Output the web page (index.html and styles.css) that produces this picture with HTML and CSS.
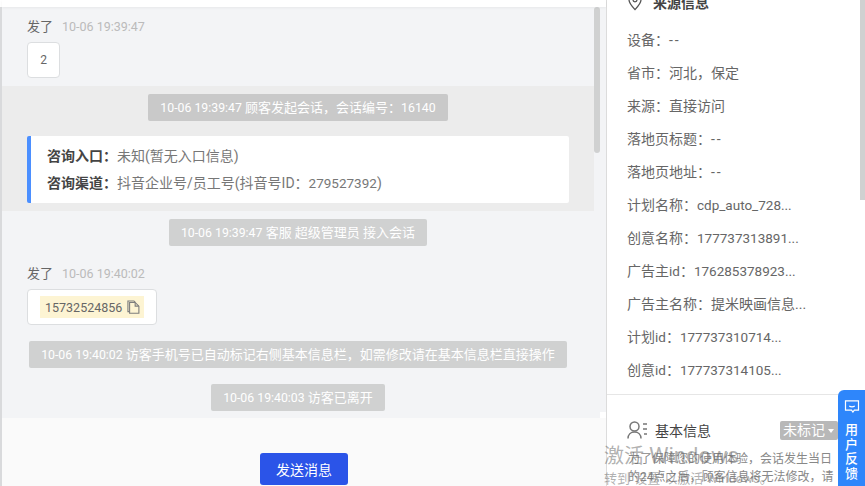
FILE: index.html
```html
<!DOCTYPE html>
<html lang="zh-CN">
<head>
<meta charset="utf-8">
<title>会话详情</title>
<link rel="stylesheet" href="styles.css">
</head>
<body>
<div class="page">
  <div class="edge"></div>
  <main class="chat">
    <div class="topbar"></div>
    <div class="chat-body">
      <div class="messages">
        <section class="msg msg-first">
          <div class="meta"><span class="who">发了</span><span class="time">10-06 19:39:47</span></div>
          <div class="bubble bubble-num">2</div>
        </section>
        <section class="band">
          <div class="pill pill-dark"><span class="num">10-06 19:39:47</span> 顾客发起会话，会话编号：<span class="num">16140</span></div>
          <div class="card">
            <p class="card-row"><b>咨询入口：</b>未知(暂无入口信息)</p>
            <p class="card-row"><b>咨询渠道：</b>抖音企业号/员工号(抖音号ID：<span class="val">279527392</span>)</p>
          </div>
        </section>
        <div class="after">
          <div class="pill"><span class="num">10-06 19:39:47</span> 客服 超级管理员 接入会话</div>
          <section class="msg msg-second">
            <div class="meta"><span class="who">发了</span><span class="time">10-06 19:40:02</span></div>
            <div class="bubble bubble-phone">
              <span class="phone">15732524856
                <svg class="copy" viewBox="0 0 14 15" width="13" height="14" fill="none" stroke="#7d7d7d" stroke-width="1.2"><path d="M2.6 12.5H1V1h6.4l1.4 1.4"/><path d="M2.8 2.6h6l4 4v7.6h-10z"/><path d="M8.8 2.6v4h4"/></svg>
              </span>
            </div>
          </section>
          <div class="pill"><span class="num">10-06 19:40:02</span> 访客手机号已自动标记右侧基本信息栏，如需修改请在基本信息栏直接操作</div>
          <div class="pill"><span class="num">10-06 19:40:03</span> 访客已离开</div>
        </div>
      </div>
      <div class="track"><div class="thumb"></div><div class="corner"></div></div>
    </div>
    <div class="composer"><button class="send" type="button">发送消息</button></div>
  </main>
  <aside class="side">
    <div class="side-scroll"></div>
    <div class="side-inner">
      <h3 class="side-title">
        <svg class="pin" viewBox="0 0 14 18" width="14" height="18" fill="none" stroke="#555" stroke-width="1.3"><path d="M7 16.6C3.6 13 1 10 1 6.8a6 6 0 0 1 12 0C13 10 10.4 13 7 16.6z"/><circle cx="7" cy="6.8" r="2"/></svg>
        来源信息
      </h3>
      <ul class="rows">
        <li>设备：<span class="dash">--</span></li>
        <li>省市：河北，保定</li>
        <li>来源：直接访问</li>
        <li>落地页标题：<span class="dash">--</span></li>
        <li>落地页地址：<span class="dash">--</span></li>
        <li>计划名称：<span class="val">cdp_auto_728...</span></li>
        <li>创意名称：<span class="val">177737313891...</span></li>
        <li>广告主<span class="val">id</span>：<span class="val">176285378923...</span></li>
        <li>广告主名称：提米映画信息...</li>
        <li>计划<span class="val">id</span>：<span class="val">177737310714...</span></li>
        <li>创意<span class="val">id</span>：<span class="val">177737314105...</span></li>
      </ul>
      <div class="basic">
        <div class="basic-head">
          <svg class="person" viewBox="0 0 20 18" width="20" height="18" fill="none" stroke="#777" stroke-width="1.5"><circle cx="7.5" cy="5.5" r="4.5"/><path d="M1 17.500c0-4 2.800-6.600 6.500-6.600s6.500 2.600 6.500 6.600"/><path d="M16 3h4M16 8h4M17 13h3"/></svg>
          <span class="basic-title">基本信息</span>
          <span class="tag">未标记<i class="caret"></i></span>
        </div>
        <p class="note">为了保障您的使用体验，会话发生当日的24点之后，顾客信息将无法修改，请</p>
      </div>
    </div>
  </aside>
  <button class="feedback" type="button">
    <svg viewBox="0 0 16 14" width="16" height="13" fill="none" stroke="#fff" stroke-width="1.3"><path d="M1 1h14v10h-4.500L9 13l-1.500-2H1z"/><path d="M5 6.500c1.600 1 4.400 1 6 0"/></svg>
    <span class="feedback-text">用户反馈</span>
  </button>
  <div class="watermark">
    <div class="wm-big">激活 <span class="wm-latin">Windows</span></div>
    <div class="wm-small">转到"设置"以激活 Windows。</div>
  </div>
</div>
</body>
</html>
```

FILE: styles.css
```css
* { box-sizing: border-box; }
html, body { margin: 0; height: 100%; overflow: hidden; }
body {
  font-family: Roboto, "Noto Sans CJK SC", sans-serif;
  font-size: 13px;
  color: #666;
  background: #fff;
}
.page { position: relative; display: flex; width: 865px; height: 486px; overflow: hidden; }
.edge { width: 2px; background: #d9dadc; flex: none; margin-top: 7px; }
.chat {
  width: 605px;
  flex: none;
  display: flex;
  flex-direction: column;
  border-right: 1px solid #dcdcdc;
  background: #fafafa;
}
.topbar { height: 7px; flex: none; background: #fff; box-shadow: 0 1px 3px rgba(0,0,0,.05); position: relative; }
.chat-body { height: 411px; flex: none; display: flex; background: #f3f4f6; }
.messages { width: 592px; flex: none; }
.track { flex: 1; display: flex; flex-direction: column; }
.thumb { width: 6px; height: 146px; background: #d0d1d1; border-radius: 3px; }
.corner { margin-top: auto; margin-left: 6px; height: 6px; background: #fff; }
.msg-first { padding: 10px 25px 8px; }
.meta { height: 20px; line-height: 20px; display: flex; gap: 9px; }
.who { color: #666; }
.time { color: #bbb; font-size: 12.5px; }
.bubble {
  margin-top: 5px;
  height: 36px;
  display: inline-flex;
  align-items: center;
  background: #fff;
  border: 1px solid #dcdee0;
  border-radius: 4px;
}
.bubble-num { width: 33px; justify-content: center; font-size: 12px; }
.bubble-phone { padding: 0 12px; width: 130px; }
.phone {
  display: inline-flex;
  align-items: center;
  gap: 5px;
  height: 22px;
  width: 104px;
  padding: 0 5px;
  background: #fdf4d3;
  font-size: 12.5px;
  white-space: nowrap;
}
.copy { flex: none; }
.num { font-size: 12.3px; }
.val { font-size: 13.5px; }
.dash { letter-spacing: 2px; }
.band { background: #ececec; padding: 8px 25px; display: flex; flex-direction: column; align-items: center; height: 125px; }
.pill {
  height: 27px;
  line-height: 27px;
  padding: 0 12px;
  background: #d0d1d1;
  color: #fff;
  border-radius: 2px;
  white-space: nowrap;
  width: fit-content;
}
.pill-dark { background: #c9c9c9; }
.card {
  margin-top: 15px;
  width: 542px;
  height: 67px;
  background: #fff;
  border-left: 4px solid #4b8fff;
  border-radius: 2px;
  padding: 7px 0 0 16px;
}
.card-row { margin: 0; height: 27px; line-height: 27px; color: #777; font-size: 14px; white-space: nowrap; }
.card-row b { color: #444; font-weight: 600; }
.after { display: flex; flex-direction: column; align-items: center; padding-top: 8px; }
.after .pill + .pill { margin-top: 16px; }
.msg-second { align-self: stretch; padding: 18px 25px 16px; }
.composer { flex: 1; display: flex; justify-content: center; padding-top: 35px; }
.send {
  width: 88px;
  height: 32px;
  background: #2b54e8;
  color: #fff;
  border: 0;
  border-radius: 3px;
  font: inherit;
  font-size: 14px;
}
.side { position: relative; flex: 1; background: #fff; overflow: hidden; }
.side-scroll { position: absolute; right: 0; top: 0; width: 5px; height: 200px; background: #d0d1d1; }
.side-inner { margin-top: -10px; }
.side-title {
  margin: 0;
  height: 24px;
  display: flex;
  align-items: center;
  gap: 11px;
  padding-left: 21px;
  font-size: 14px;
  font-weight: 600;
  color: #444;
}
.rows { list-style: none; margin: 0; padding: 10px 0 0 20px; font-size: 14px; }
.rows li { height: 33px; line-height: 33px; white-space: nowrap; }
.basic { border-top: 1px solid #e6e6e6; margin-top: 7px; }
.basic-head { display: flex; align-items: center; height: 36px; padding-left: 20px; margin-top: 17px; }
.basic-title { margin-left: 8px; color: #444; font-size: 14px; }
.tag {
  margin-left: auto;
  margin-right: 27px;
  width: 58px;
  height: 19px;
  line-height: 19px;
  padding-left: 3px;
  background: #b8b8b8;
  color: #fff;
  border-radius: 2px;
  font-size: 14px;
}
.caret {
  display: inline-block;
  margin-left: 3px;
  vertical-align: 2px;
  border: 3.5px solid transparent;
  border-top: 4px solid #fff;
  border-bottom: 0;
}
.note { margin: 2px 0 0 21px; line-height: 18px; font-size: 12px; color: #888; width: 208px; }
.feedback {
  position: absolute;
  right: 0;
  top: 390px;
  width: 27px;
  height: 96px;
  padding: 10px 0 0;
  background: #2e86fb;
  border: 0;
  border-radius: 6px 0 0 0;
  color: #fff;
  display: flex;
  flex-direction: column;
  align-items: center;
  font-family: inherit;
}
.feedback-text { width: 13px; margin-top: 10px; font-size: 13px; line-height: 14.5px; word-break: break-all; font-weight: 500; }
.watermark { position: absolute; left: 604px; top: 443px; color: rgba(100,100,100,.5); pointer-events: none; white-space: nowrap; }
.wm-big { font-size: 20px; line-height: 26px; }
.wm-latin { font-size: 22px; }
.wm-small { font-size: 13px; line-height: 20px; }
```
